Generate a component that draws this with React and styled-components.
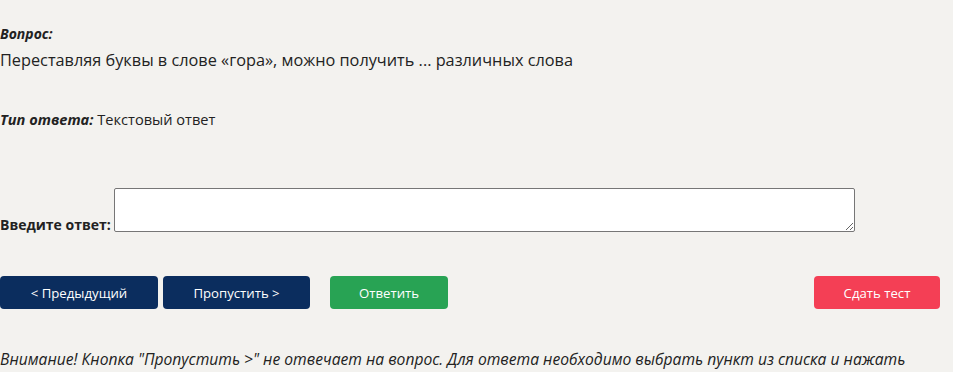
import styled, { createGlobalStyle } from "styled-components";

const GlobalStyle = createGlobalStyle`
  html, body {
    margin: 0;
    padding: 0;
    background: #f3f2ef;
  }
  body {
    font-family: "Open Sans", "Noto Sans", sans-serif;
    color: #222;
    overflow: hidden;
  }
`;

const Page = styled.div`
  padding: 24px 0 0 0;
  width: 953px;
  height: 372px;
  box-sizing: border-box;
  overflow: hidden;
`;

const Caption = styled.div`
  font-size: 14px;
  font-weight: 700;
  font-style: italic;
  line-height: 20px;
`;

const Question = styled.p`
  margin: 4px 0 0 0;
  font-size: 16.3px;
  line-height: 24px;
`;

const TypeLine = styled.div`
  margin-top: 37px;
  font-size: 14.6px;
  line-height: 20px;
`;

const TypeLabel = styled.span`
  font-weight: 700;
  font-style: italic;
`;

const AnswerRow = styled.div`
  display: flex;
  align-items: flex-end;
  gap: 3px;
  margin-top: 59px;
`;

const AnswerLabel = styled.label`
  font-size: 14px;
  font-weight: 700;
  line-height: 20px;
  margin-bottom: -3px;
`;

const AnswerInput = styled.textarea`
  width: 741px;
  height: 44px;
  box-sizing: border-box;
  border: 1px solid #767676;
  border-radius: 2px;
  background: #fff;
  padding: 2px;
  font-family: inherit;
  font-size: 14px;
  resize: vertical;
`;

const Buttons = styled.div`
  display: flex;
  align-items: center;
  margin-top: 44px;
  width: 940px;
`;

const Btn = styled.button`
  height: 33px;
  width: ${(p) => p.$w}px;
  margin-left: ${(p) => p.$gap || 0}px;
  border: none;
  border-radius: 4px;
  background: ${(p) => p.$bg};
  color: #fff;
  font-family: inherit;
  font-size: 13.2px;
  cursor: pointer;
`;

const Spacer = styled.div`
  flex: 1;
`;

const Note = styled.p`
  margin: 38px 0 0 0;
  font-size: 15.65px;
  font-style: italic;
  line-height: 24px;
  color: #222;
`;

export default function App() {
  return (
    <>
      <GlobalStyle />
      <Page>
        <Caption>Вопрос:</Caption>
        <Question>
          Переставляя буквы в слове «гора», можно получить ... различных слова
        </Question>
        <TypeLine>
          <TypeLabel>Тип ответа:</TypeLabel> Текстовый ответ
        </TypeLine>
        <AnswerRow>
          <AnswerLabel>Введите ответ:</AnswerLabel>
          <AnswerInput />
        </AnswerRow>
        <Buttons>
          <Btn $w={158} $bg="#0b2d5e">&lt; Предыдущий</Btn>
          <Btn $w={147} $gap={5} $bg="#0b2d5e">Пропустить &gt;</Btn>
          <Btn $w={118} $gap={20} $bg="#28a354">Ответить</Btn>
          <Spacer />
          <Btn $w={126} $bg="#f43f55">Сдать тест</Btn>
        </Buttons>
        <Note>
          Внимание! Кнопка "Пропустить &gt;" не отвечает на вопрос. Для ответа
          необходимо выбрать пункт из списка и нажать "Ответить"
        </Note>
      </Page>
    </>
  );
}
